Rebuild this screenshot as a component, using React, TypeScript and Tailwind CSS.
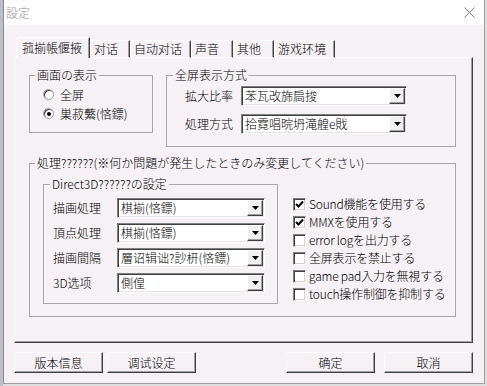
import { ReactNode } from "react";

const font = { fontFamily: '"Noto Sans CJK JP", "Noto Sans CJK SC", sans-serif' };

function Group({
  title,
  className,
  legendClass = "ml-[5px]",
  children,
}: {
  title: string;
  className: string;
  legendClass?: string;
  children: ReactNode;
}) {
  return (
    <fieldset className={`border border-[#a9a5a9] ${className}`}>
      <legend className={`px-[2px] leading-[16px] ${legendClass}`}>{title}</legend>
      {children}
    </fieldset>
  );
}

function Combo({ value, width }: { value: string; width: string }) {
  return (
    <div
      className={`${width} h-[20px] flex items-center bg-white border border-t-[#808080] border-l-[#808080] border-r-white border-b-white shadow-[inset_1px_1px_0_#404040,inset_-1px_-1px_0_#e3e3e3]`}
    >
      <span className="flex-1 pl-[3px] leading-[16px] whitespace-nowrap overflow-hidden">
        {value}
      </span>
      <div className="w-[16px] h-[16px] mr-[1px] flex items-center justify-center bg-[#f0f0f0] border border-t-white border-l-white border-r-[#404040] border-b-[#404040] shadow-[inset_-1px_-1px_0_#a0a0a0]">
        <svg width="7" height="4" viewBox="0 0 7 4">
          <path d="M0 0h7L3.5 4z" fill="#000" />
        </svg>
      </div>
    </div>
  );
}

function Radio({ label, checked }: { label: string; checked?: boolean }) {
  return (
    <div className="h-[19px] flex items-center">
      <div className="w-[11px] h-[11px] rounded-full bg-white border border-[#9a9a9a] flex items-center justify-center shadow-[inset_1px_1px_0_#404040]">
        {checked && <div className="w-[4px] h-[4px] rounded-full bg-black" />}
      </div>
      <span className="ml-[6px]">{label}</span>
    </div>
  );
}

function Check({ label, checked }: { label: string; checked?: boolean }) {
  return (
    <div className="h-[18px] flex items-center">
      <div className="w-[13px] h-[13px] bg-white border border-t-[#808080] border-l-[#808080] border-r-white border-b-white shadow-[inset_1px_1px_0_#404040,inset_-1px_-1px_0_#d4d0c8] flex items-center justify-center">
        {checked && (
          <svg width="9" height="9" viewBox="0 0 9 9">
            <path d="M1 4 L3.5 6.5 L8 1.5" stroke="#000" strokeWidth="2" fill="none" />
          </svg>
        )}
      </div>
      <span className="ml-[3px] whitespace-nowrap tracking-[-0.2px]">{label}</span>
    </div>
  );
}

function Button({ label, className = "" }: { label: string; className?: string }) {
  return (
    <button
      type="button"
      className={`w-[89px] h-[21px] bg-[#f5f1f5] border border-t-white border-l-white border-r-[#404040] border-b-[#404040] shadow-[inset_-1px_-1px_0_#a0a0a0] leading-[16px] ${className}`}
    >
      {label}
    </button>
  );
}

const tabs = [
  { label: "对话", w: "w-[40px]" },
  { label: "自动对话", w: "w-[61px]" },
  { label: "声音", w: "w-[42px]" },
  { label: "其他", w: "w-[41px]" },
  { label: "游戏环境", w: "w-[61px]" },
];

const d3dRows = [
  { label: "描画処理", value: "棋揃(悋鏢)" },
  { label: "頂点処理", value: "棋揃(悋鏢)" },
  { label: "描画間隔", value: "層诏辑诎?訬枅(悋鏢)" },
  { label: "3D选项", value: "側偟" },
];

const checks = [
  { label: "Sound機能を使用する", checked: true },
  { label: "MMXを使用する", checked: true },
  { label: "error logを出力する" },
  { label: "全屏表示を禁止する" },
  { label: "game pad入力を無視する" },
  { label: "touch操作制御を抑制する" },
];

export default function App() {
  return (
    <div className="w-[487px] h-[386px] flex bg-[#dedede] text-[12px] font-light text-black overflow-hidden" style={font}>
      <div className="w-[3px] h-full bg-[#b9c0cb]" />
      <div className="w-[482px] h-[384px] flex flex-col border-l border-r border-b border-l-[#8c8c8c] border-r-[#9c9c9c] border-b-[#9c9c9c] bg-[#f5f1f5]">
        <div className="h-[25px] bg-white flex items-center pl-[2px] pr-[9px]">
          <span className="text-[#8e8e8e] leading-[16px] pt-[1px]">設定</span>
          <div className="flex-1" />
          <svg width="11" height="11" viewBox="0 0 11 11">
            <path d="M0.5 0.5L10.5 10.5M10.5 0.5L0.5 10.5" stroke="#7a7a7a" strokeWidth="1" />
          </svg>
        </div>

        <div className="flex flex-col pl-[10px] pr-[11px]">
          <div className="mt-[12px] -mb-[1px] h-[21px] flex items-end pl-[2px] relative z-10">
            <div className="w-[74px] h-[21px] px-[5px] pt-[2px] leading-[16px] bg-[#f5f1f5] border-t border-l border-r border-t-white border-l-white border-r-[#404040] shadow-[inset_-1px_0_0_#a0a0a0] whitespace-nowrap">
              菰揃帳偃掖
            </div>
            {tabs.map((t) => (
              <div
                key={t.label}
                className={`${t.w} h-[18px] px-[3px] leading-[16px] border-t border-l border-r border-t-white border-l-white border-r-[#404040] shadow-[inset_-1px_0_0_#a0a0a0] border-b border-b-white whitespace-nowrap`}
              >
                {t.label}
              </div>
            ))}
          </div>

          <div className="h-[286px] border border-t-white border-l-white border-r-[#404040] border-b-[#404040] shadow-[inset_-1px_-1px_0_#a0a0a0] pl-[14px] pt-[9px]">
            <div className="flex gap-[13px]">
              <Group title="画面の表示" className="w-[124px] h-[66px]">
                <div className="pl-[13px] pt-[2px]">
                  <Radio label="全屏" />
                  <Radio label="巣菽蘩(悋鏢)" checked />
                </div>
              </Group>
              <Group title="全屏表示方式" className="w-[290px] h-[80px]" legendClass="ml-[6px]">
                <div className="pl-[18px] pt-[3px] flex flex-col gap-[8px]">
                  <div className="flex items-center">
                    <span className="w-[56px]">拡大比率</span>
                    <Combo value="苯瓦改旆扃捘" width="w-[166px]" />
                  </div>
                  <div className="flex items-center">
                    <span className="w-[56px]">処理方式</span>
                    <Combo value="拾霓唱晥坍滝艎e戝" width="w-[166px]" />
                  </div>
                </div>
              </Group>
            </div>

            <Group
              title="処理??????(※何か問題が発生したときのみ変更してください)"
              className="mt-[8px] w-[427px] h-[162px]"
            >
              <div className="flex pl-[13px]">
                <Group title="Direct3D??????の設定" className="mt-[5px] w-[235px] h-[128px]" legendClass="ml-[6px]">
                  <div className="pl-[9px] pt-[6px] flex flex-col gap-[5px]">
                    {d3dRows.map((r) => (
                      <div key={r.label} className="flex items-center">
                        <span className="w-[64px]">{r.label}</span>
                        <Combo value={r.value} width="w-[148px]" />
                      </div>
                    ))}
                  </div>
                </Group>
                <div className="ml-[15px] mt-[24px] flex flex-col">
                  {checks.map((c) => (
                    <Check key={c.label} label={c.label} checked={c.checked} />
                  ))}
                </div>
              </div>
            </Group>
          </div>

          <div className="mt-[9px] flex items-center">
            <Button label="版本信息" />
            <Button label="调试设定" className="ml-[4px]" />
            <div className="flex-1" />
            <Button label="确定" />
            <Button label="取消" className="ml-[9px]" />
          </div>
        </div>
      </div>
    </div>
  );
}
